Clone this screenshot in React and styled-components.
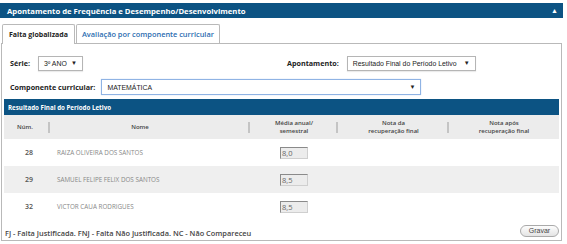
import React from "react";
import styled, { createGlobalStyle } from "styled-components";

const Global = createGlobalStyle`
  html, body {
    margin: 0;
    padding: 0;
    background: #fff;
  }
  body {
    font-family: "Open Sans", "Liberation Sans", sans-serif;
    font-size: 8px;
    color: #333;
  }
`;

const Page = styled.div`
  width: 567px;
  height: 244px;
  padding-top: 3px;
  box-sizing: border-box;
  overflow: hidden;
`;

const HeaderBar = styled.div`
  width: 563px;
  height: 15px;
  background: #0c5383;
  color: #fff;
  display: flex;
  align-items: center;
  justify-content: space-between;
  padding: 0 5px 0 7px;
  box-sizing: border-box;
  font-weight: 700;
  font-size: 7.7px;
  white-space: nowrap;
`;

const Collapse = styled.span`
  font-size: 7px;
`;

const Tabs = styled.div`
  display: flex;
  margin: 6px 0 0 2px;
  position: relative;
  z-index: 1;
`;

const Tab = styled.div`
  height: ${(p) => (p.$active ? 20 : 19)}px;
  margin-bottom: ${(p) => (p.$active ? -1 : 0)}px;
  display: flex;
  align-items: center;
  padding: 0 ${(p) => (p.$active ? 6 : 5)}px;
  box-sizing: border-box;
  border: 1px solid #b9b9b9;
  border-bottom: none;
  border-radius: 2px 2px 0 0;
  background: #fff;
  font-size: ${(p) => (p.$active ? 7 : 7.4)}px;
  font-weight: ${(p) => (p.$active ? 700 : 600)};
  color: ${(p) => (p.$active ? "#222" : "#2b6cb0")};
  margin-right: 1px;
  white-space: nowrap;
`;

const Panel = styled.div`
  margin-left: 1px;
  width: 561px;
  height: 198px;
  border: 1px solid #b9b9b9;
  box-sizing: border-box;
  padding: 11px 2px 0 2px;
  display: flex;
  flex-direction: column;
`;

const FilterRow = styled.div`
  display: flex;
  align-items: center;
  height: 16px;
  margin-bottom: ${(p) => p.$gap || 0}px;
`;

const Field = styled.div`
  display: flex;
  align-items: center;
  margin-left: ${(p) => p.$left || 0}px;
`;

const Label = styled.span`
  font-weight: 700;
  font-size: 7.2px;
  color: #222;
  white-space: nowrap;
  padding-left: ${(p) => p.$pad || 0}px;
  margin-right: ${(p) => p.$gap}px;
`;

const SelectBox = styled.div`
  width: ${(p) => p.$width}px;
  height: ${(p) => p.$height || 15}px;
  box-sizing: border-box;
  border: 1px solid ${(p) => (p.$focus ? "#8fb3e4" : "#b5b5b5")};
  background: #fff;
  display: flex;
  align-items: center;
  justify-content: space-between;
  padding: 0 5px;
  font-family: "Liberation Sans", Arial, sans-serif;
  font-size: 6.9px;
  color: #222;
  white-space: nowrap;
  box-shadow: ${(p) => (p.$focus ? "0 0 1px #b8d0f0" : "0 1px 1px rgba(0,0,0,0.08)")};
`;

const Arrow = styled.span`
  font-size: 6px;
  color: #222;
`;

const Table = styled.div`
  margin-top: 4px;
  width: 555px;
`;

const TableTitle = styled.div`
  height: 16px;
  background: #0c5383;
  color: #fff;
  font-weight: 700;
  font-size: 6.2px;
  display: flex;
  align-items: center;
  padding-left: 4px;
`;

const cols = "46px 200px 88px 111px 110px";

const HeadRow = styled.div`
  display: grid;
  grid-template-columns: ${cols};
  height: 24px;
  background: #ececec;
`;

const HeadCell = styled.div`
  position: relative;
  display: flex;
  align-items: center;
  justify-content: center;
  text-align: center;
  font-weight: 600;
  font-size: 6px;
  line-height: 8px;
  color: #444;
  padding-right: ${(p) => p.$shift || 0}px;
  &:not(:last-child)::after {
    content: "";
    position: absolute;
    right: 0;
    top: 7px;
    width: 2px;
    height: 11px;
    background: #c4c4c4;
  }
`;

const Row = styled.div`
  display: grid;
  grid-template-columns: ${cols};
  height: 27px;
  align-items: center;
  background: ${(p) => (p.$odd ? "#efefef" : "#fff")};
  color: #888;
`;

const NumCell = styled.div`
  text-align: center;
  font-weight: 600;
  font-size: 7px;
  color: #555;
  padding-left: 4px;
`;

const NameCell = styled.div`
  padding-left: 7px;
  font-size: 6.3px;
  white-space: nowrap;
`;

const GradeCell = styled.div`
  display: flex;
  justify-content: center;
`;

const GradeInput = styled.div`
  width: 28px;
  height: 12px;
  box-sizing: border-box;
  border: 1px solid #cfcfcf;
  border-top-color: #8a8a8a;
  border-left-color: #8a8a8a;
  background: #ececec;
  font-size: 7.5px;
  line-height: 10px;
  padding-left: 1px;
  color: #666;
`;

const Footer = styled.div`
  display: flex;
  align-items: center;
  justify-content: space-between;
  flex: 1;
  padding: 0 0 0 1px;
`;

const Legend = styled.span`
  font-weight: 600;
  font-size: 7.4px;
  color: #444;
  margin-top: 5px;
  white-space: nowrap;
`;

const SaveButton = styled.button`
  width: 39px;
  height: 12px;
  border-radius: 6px;
  border: 1px solid #aaa;
  background: linear-gradient(#fdfdfd, #e4e4e4);
  font-family: "Liberation Sans", Arial, sans-serif;
  font-size: 7px;
  color: #444;
  padding: 0;
  margin-top: 2px;
  line-height: 10px;
`;

const students = [
  { num: 28, name: "RAIZA OLIVEIRA DOS SANTOS", media: "8,0" },
  { num: 29, name: "SAMUEL FELIPE FELIX DOS SANTOS", media: "8,5" },
  { num: 32, name: "VICTOR CAUA RODRIGUES", media: "8,5" },
];

export default function App() {
  return (
    <Page>
      <Global />
      <HeaderBar>
        <span>Apontamento de Frequência e Desempenho/Desenvolvimento</span>
        <Collapse>▲</Collapse>
      </HeaderBar>
      <Tabs>
        <Tab $active>Falta globalizada</Tab>
        <Tab>Avaliação por componente curricular</Tab>
      </Tabs>
      <Panel>
        <FilterRow $gap={8}>
          <Field>
            <Label $pad={6} $gap={8}>Série:</Label>
            <SelectBox $width={45}>
              3º ANO <Arrow>▼</Arrow>
            </SelectBox>
          </Field>
          <Field $left={204}>
            <Label $gap={8}>Apontamento:</Label>
            <SelectBox $width={129}>
              Resultado Final do Período Letivo <Arrow>▼</Arrow>
            </SelectBox>
          </Field>
        </FilterRow>
        <FilterRow>
          <Field>
            <Label $pad={6} $gap={6}>Componente curricular:</Label>
            <SelectBox $width={320} $height={16} $focus>
              MATEMÁTICA <Arrow>▼</Arrow>
            </SelectBox>
          </Field>
        </FilterRow>
        <Table>
          <TableTitle>Resultado Final do Período Letivo</TableTitle>
          <HeadRow>
            <HeadCell $shift={4}>Núm.</HeadCell>
            <HeadCell $shift={20}>Nome</HeadCell>
            <HeadCell>
              Média anual/
              <br />
              semestral
            </HeadCell>
            <HeadCell>
              Nota da
              <br />
              recuperação final
            </HeadCell>
            <HeadCell>
              Nota após
              <br />
              recuperação final
            </HeadCell>
          </HeadRow>
          {students.map((s, i) => (
            <Row key={s.num} $odd={i % 2 === 1}>
              <NumCell>{s.num}</NumCell>
              <NameCell>{s.name}</NameCell>
              <GradeCell>
                <GradeInput>{s.media}</GradeInput>
              </GradeCell>
              <div />
              <div />
            </Row>
          ))}
        </Table>
        <Footer>
          <Legend>
            FJ - Falta Justificada. FNJ - Falta Não Justificada. NC - Não
            Compareceu
          </Legend>
          <SaveButton>Gravar</SaveButton>
        </Footer>
      </Panel>
    </Page>
  );
}
